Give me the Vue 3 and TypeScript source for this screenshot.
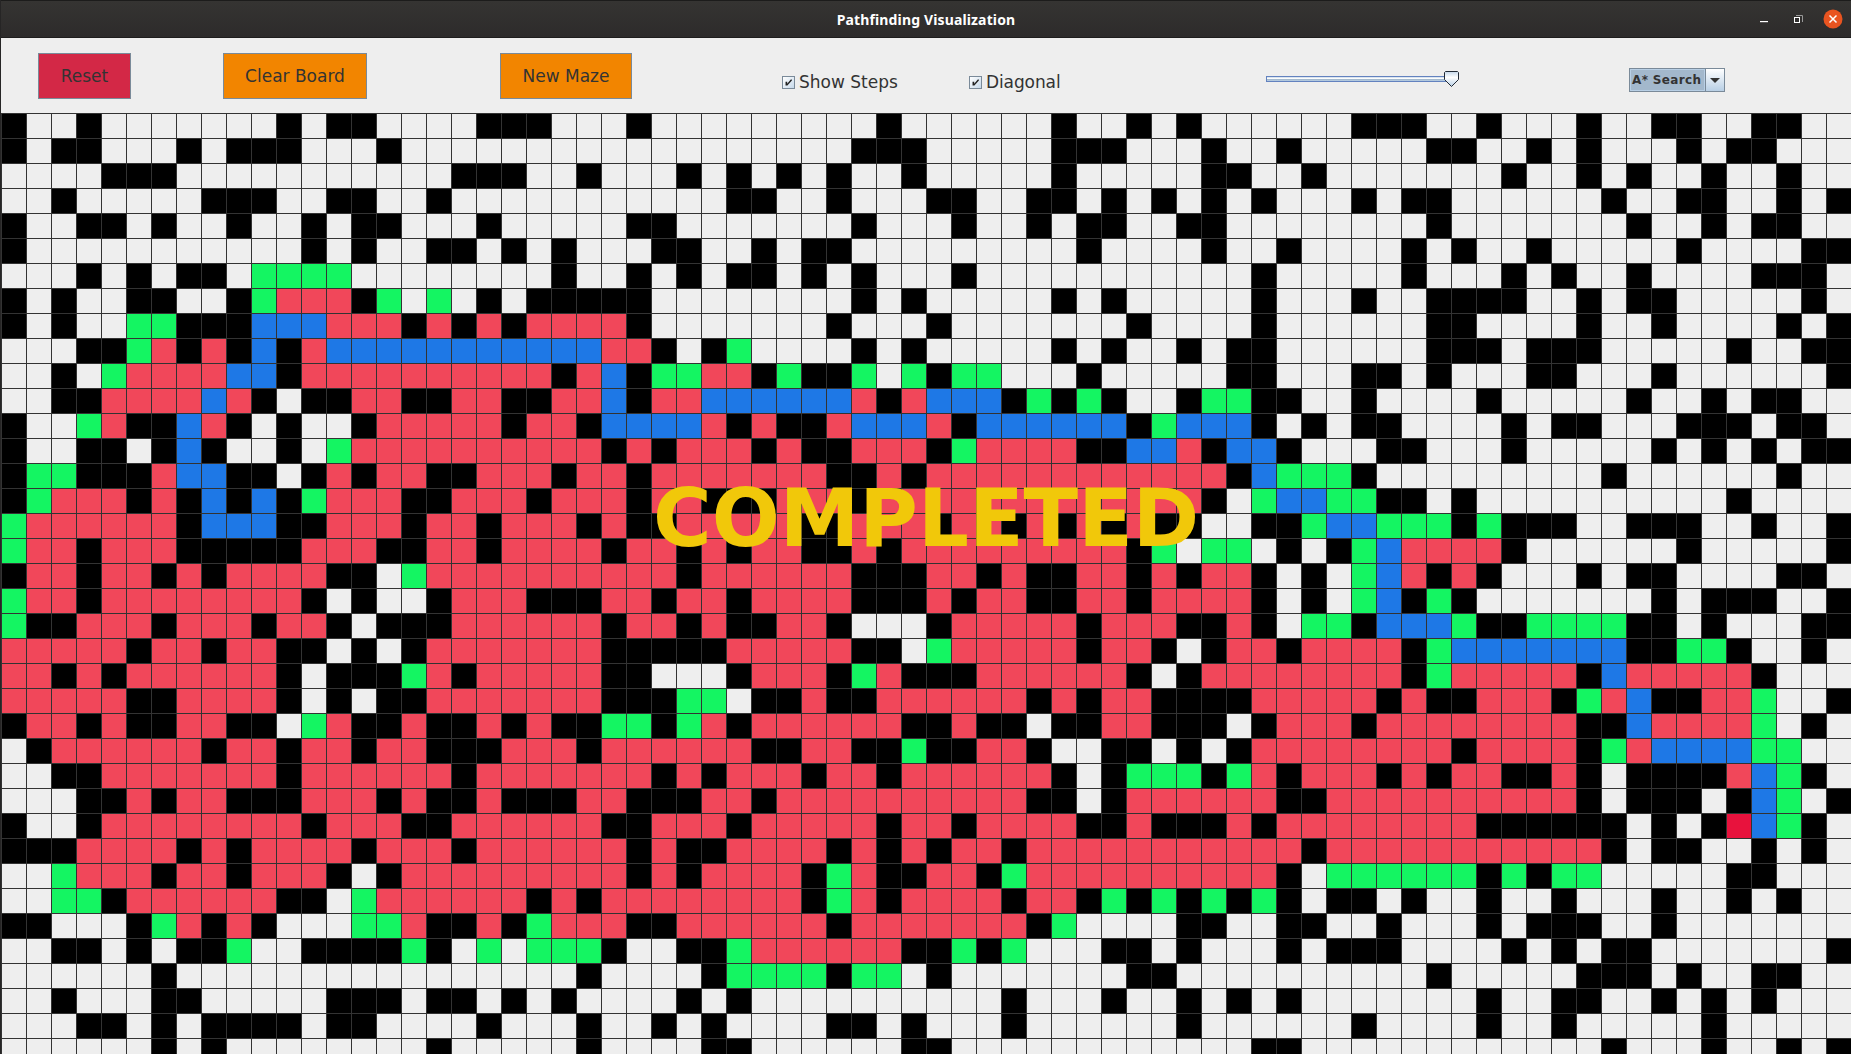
<script setup lang="ts">
import { ref } from 'vue'

type Kind = 'open' | 'wall' | 'frontier' | 'visited' | 'path' | 'target'

const kinds: Record<string, Kind> = {
  '.': 'open',
  '#': 'wall',
  g: 'frontier',
  r: 'visited',
  b: 'path',
  e: 'target',
}

const maze: string[] = [
  '#..#.......#.## ....###...#.... .....#......#.. #.#......###..# ...#..##..##..',
  '#.##...#.###... #.............. ....###.....### ...#..#.....##. .#.#...#.##...',
  '....###........ ...###..#...#.# .#.#..#.....#.. ...##..#....... #..#.#..#..#..',
  '..#.....###..## ..#...........# #..#...##..##.# .#.#.#...#.##.. ....#..##..#.#',
  '#..##.#..#..#.# #...#.....##... ....#...#..#.## ..##........#.. .....#..#.##..',
  '#...........#.# ..##.#.#...##.. #.##.........#. ...#..#....#.#. .#.....#....##',
  '...#.#.##.gggg. .......#..#.#.# #.#.#...#...... .....#.....#... #.#..#....###.',
  '#.#..##..#grrr# g.g.#.#####.... ....#.#.....#.# .....#...#..### #..#.##.....#.',
  '#.#..gg###bbbrr r#r#r#rrrr#.... ...#...#....... #....#......##. ...#..#....#.#',
  '...##gr#r#b#rbb bbbbbbbbbrr#.#g ....#.#.....#.# ..#.##......### .###.....#..##',
  '..#.grrrrbb#rrr rrrrrrr#rb#ggrr #g##g.g#gg...#. ....##...##.#.. .##...#......#',
  '..##rrrrbr#.##r r##rr##rrb#rrbb bbbbr#rbbb#g#g# ..#gg##..#....# .....#..#.##..',
  '#..gr##br#.#..# rrrrr#rr#bbbbr# r##rbbbr#bbbbbb #gbbb#.#.##.... #.##...###.##.',
  '#..##.#b#..#.gr rrrrrrrrr#r#rrr #r##rrr#grrrr## bbr#bb#...##... #.....#.#.#.##',
  '#gg###rbb##.#r# rr##rrr#rr#rrrr rrr##r#rrrrrrrr rrrr#bggg#..... ....#......#..',
  '#grrr#r#b#b#grr r##rrr#rrr#rr## #rrr#rrrrrrrrrr rrr#.gbbgg##.#. .........#....',
  'grrrrrr#bbb##rr r#rr#rrr#r##rrr rr##rrr#rr#r#r# r##..##gbbggg#g ###..###..#..#',
  'grr#rrr#####rrr ##rr#rrrr#rr#r# rr##r#rrrrrrrrr #g.gg.#.#gbrrrr #......#.....#',
  '#rr#rr#r#rrrr## .grrrrrrrrrr#rr rrrr###rr#r##rr #r#rr#.#.gbr#r# ...#.##....##.',
  'grr#rrrrrrrr#.# ..#rrr###rr#rr# rrrr###r#rr##rr #rrrr#.#.gb#g#. ......#.###..#',
  'g##rrr#rrr#rr#. ###rrrrrr#rr#r# #rr#...#rrrrr#r rr##r#.gg#bbbg# #gggg##.#...##',
  'rrrrr#rr#rr##.# .#rrrrrrr#####r rrrr##.grrrrr#r r#.#rr#rrrr#gbb bbbbb##gg#..#.',
  'rr#r#rrrrrr#.## #gr#rrrrr##...# rrr#gr###rrrrrr #.#rrrrrrrr#grr rrr#brrrrr#...',
  'rrrrr##rrrr#.#. ##rrrrrrr###gg. ##r##rrrrrr#r#r r####rrrrr#r##r rr#grb##rrg..#',
  '#rr#r##rr##.gr# #r##r#r##gg#gr# rrrrrr##r##.##r r###.#rrr#rrrrr rrr##brrrrg.#.',
  '.#rrrrrr#rr#rr# rr###rrr#rrrrrr ##rr##g##rr#..# #.#.#rrrrrrrr#r rrr#grbbbbgg..',
  '..##rrrrrrr#rrr rrr#rrrrrrr#r#r rr#rr#rrrrrr#.# ggg#gr#rrr#r#rr ##r#.####rbg#.',
  '...##r#rr###rrr #r##r###rr###rr #rrrrrrrrrr##.# rrrrrr##rrrrrrr rrr#.###.#bg.#',
  '#..#rrrrrrrr#rr r##rrrrrr##rrr# rrrrr#rr#rrrr## r###r#rrrrrrrr# #####.#.#ebg#.',
  '###rrrr#r#rrrr# rrr#rrrrrr#r##r rrr#r#r#rr#rrrr rrrrrrr#rrrrrrr rrrr#.##..#.#.',
  '..grrr#rr#rrr#. #rrrrrrrrr#r#rr rr#gr##rr#grrrr rrrrrr#.gggggg# g#gg.....##...',
  '..gg#rrrrrr##.g rrrrrr#r#rrrrrr rr#gr#rrrr#rr#g #g#g#g#.##.#..# ..#...#..#.#..',
  '##...#gr#r#...g gr##r#grrr##rrr rrr#rrrrrrr#g.. ..##..##..#...# .###..#.......',
  '..##.#.##g..### #g#.g.ggg#..##g rrrrrr##g#g...# #.#...#.###.... #.#.##.......#',
  '......#........ ........#....#g ggg#gg.#....... ##..........#.. ...###.#..##..',
  '..#...##.....## #.##.#.#....#.# ..........#...# ..#.#.#.......# ..##..#.#.#...',
  '...##.#.####.## ....#...#..#.#. ...##.#...#.... ..#......#....# ..#.....#.....',
  '......#.#...... ..#.....#....## ......##....... .....##........ ....#...#..#.#',
]

const rows: Kind[][] = maze.map((line) =>
  [...line.replace(/ /g, '')].map((c) => kinds[c]),
)

const showSteps = ref(true)
const diagonal = ref(true)
</script>

<template>
  <div class="window">
    <header class="titlebar">
      <span class="title">Pathfinding Visualization</span>
      <div class="controls">
        <svg width="18" height="20" viewBox="0 0 18 20">
          <rect x="5" y="12" width="8" height="1.2" fill="#fff" />
        </svg>
        <svg width="18" height="20" viewBox="0 0 18 20">
          <path d="M7 6.5H13.5V13" fill="none" stroke="#999" />
          <rect x="5.5" y="8.5" width="5" height="5" fill="none" stroke="#fff" />
        </svg>
        <svg width="20" height="20" viewBox="0 0 20 20">
          <circle cx="10" cy="10" r="9.5" fill="#e95420" />
          <path d="M6.5 6.5l7 7M13.5 6.5l-7 7" stroke="#fff" stroke-width="1.5" />
        </svg>
      </div>
    </header>

    <div class="toolbar">
      <button class="btn reset">Reset</button>
      <button class="btn clear">Clear Board</button>
      <button class="btn maze">New Maze</button>
      <label class="check steps" @click="showSteps = !showSteps">
        <svg class="box" width="13" height="13" viewBox="0 0 13 13">
          <path v-if="showSteps" d="M3 5.5h2v2.6l4.2-5.1h1.3v1L5.2 10H3z" fill="#222" />
        </svg>
        <span>Show Steps</span>
      </label>
      <label class="check diag" @click="diagonal = !diagonal">
        <svg class="box" width="13" height="13" viewBox="0 0 13 13">
          <path v-if="diagonal" d="M3 5.5h2v2.6l4.2-5.1h1.3v1L5.2 10H3z" fill="#222" />
        </svg>
        <span>Diagonal</span>
      </label>
      <div class="slider">
        <div class="track"></div>
        <svg class="thumb" width="15" height="16" viewBox="0 0 15 16">
          <defs>
            <linearGradient id="knob" x1="0" y1="0" x2="0" y2="1">
              <stop offset="0" stop-color="#c4d7ea" />
              <stop offset="0.4" stop-color="#ffffff" />
              <stop offset="1" stop-color="#b8cfe5" />
            </linearGradient>
          </defs>
          <path d="M1.5 0.5h12l1 1v7l-7 7l-7-7v-7z" fill="url(#knob)" stroke="#222b36" />
        </svg>
      </div>
      <div class="combo">
        <span class="value">A* Search</span>
        <span class="arrow">
          <svg width="10" height="5" viewBox="0 0 10 5"><path d="M0 0h10l-5 5z" fill="#333" /></svg>
        </span>
      </div>
    </div>

    <main class="board">
      <div v-for="(row, y) in rows" :key="y" class="row">
        <i v-for="(kind, x) in row" :key="x" class="cell" :class="kind"></i>
      </div>
      <div class="banner">COMPLETED</div>
    </main>
  </div>
</template>

<style>
html,
body {
  margin: 0;
  overflow: hidden;
}
</style>

<style scoped>
.window {
  box-sizing: border-box;
  width: 1851px;
  height: 1054px;
  display: flex;
  flex-direction: column;
  overflow: hidden;
  background: #eee;
  border-left: 1px solid #262525;
  font-family: 'DejaVu Sans', sans-serif;
  color: #333;
}
.titlebar {
  box-sizing: border-box;
  flex: none;
  height: 38px;
  display: grid;
  grid-template-columns: 1fr auto 1fr;
  align-items: center;
  background: linear-gradient(#353432, #2d2b2b);
  border-top: 1px solid #1c1c1b;
  border-bottom: 1px solid #1e1d1d;
}
.title {
  grid-column: 2;
  font: bold 14px/20px 'Noto Sans', sans-serif;
  letter-spacing: 0.14px;
  color: #fff;
  white-space: nowrap;
  padding-top: 1px;
}
.controls {
  display: flex;
  justify-content: flex-end;
  align-items: center;
  gap: 16px;
  padding-right: 8px;
}
.toolbar {
  flex: none;
  height: 75px;
  display: flex;
  align-items: flex-start;
}
.btn {
  box-sizing: border-box;
  height: 46px;
  margin: 15px 0 0;
  padding: 0;
  border: 1px solid #7a8a99;
  border-radius: 0;
  font: 17px/44px 'DejaVu Sans', sans-serif;
  color: #333;
}
.reset {
  width: 93px;
  margin-left: 37px;
  background: #d32846;
}
.clear {
  width: 144px;
  margin-left: 92px;
  background: #f28500;
}
.maze {
  width: 132px;
  margin-left: 133px;
  background: #f28500;
}
.check {
  display: flex;
  align-items: flex-start;
  gap: 4px;
  height: 20px;
  margin-top: 34px;
  font-size: 17px;
  line-height: 20px;
  white-space: nowrap;
}
.box {
  box-sizing: border-box;
  flex: none;
  margin-top: 4px;
  border: 1px solid #7a8a99;
  background: linear-gradient(135deg, #fff, #c5d8ea);
}
.steps {
  width: 130px;
  margin-left: 150px;
}
.diag {
  width: 100px;
  margin-left: 57px;
  letter-spacing: -0.1px;
}
.slider {
  position: relative;
  width: 193px;
  height: 20px;
  margin: 31px 0 0 197px;
  display: flex;
  align-items: center;
}
.track {
  box-sizing: border-box;
  width: 185px;
  height: 6px;
  border: 1px solid #6382bf;
  background: linear-gradient(#c8d8e8, #fff 40%, #a3b8cc 60%, #b8cfe5);
}
.thumb {
  position: absolute;
  right: 0;
  top: 2px;
}
.combo {
  box-sizing: border-box;
  display: flex;
  width: 96px;
  height: 24px;
  margin: 30px 0 0 170px;
  border: 1px solid #7a8a99;
}
.value {
  box-sizing: border-box;
  width: 75px;
  border: 1px solid #b8cfe5;
  background: #a3b8cc;
  font-weight: bold;
  font-size: 12px;
  line-height: 20px;
  letter-spacing: 0.35px;
  padding-left: 1px;
  white-space: nowrap;
}
.arrow {
  flex: 1;
  display: flex;
  align-items: center;
  justify-content: center;
  border-left: 1px solid #7a8a99;
  background: linear-gradient(#fff, #b8cfe5);
}
.board {
  position: relative;
  flex: 1;
  min-height: 0;
  overflow: hidden;
  background: #333;
}
.row {
  display: flex;
  height: 25px;
}
.cell {
  box-sizing: border-box;
  flex: none;
  width: 25px;
  height: 25px;
  border-top: 1px solid #333;
  border-left: 1px solid #333;
}
.open {
  background: #eee;
}
.wall {
  background: #000;
}
.frontier {
  background: #14f562;
}
.visited {
  background: #f1475a;
}
.path {
  background: #1e78e6;
}
.target {
  background: #e8123d;
}
.banner {
  position: absolute;
  left: 652px;
  top: 359px;
  font-weight: bold;
  font-size: 80px;
  line-height: 94px;
  color: #f1c80a;
}
</style>
